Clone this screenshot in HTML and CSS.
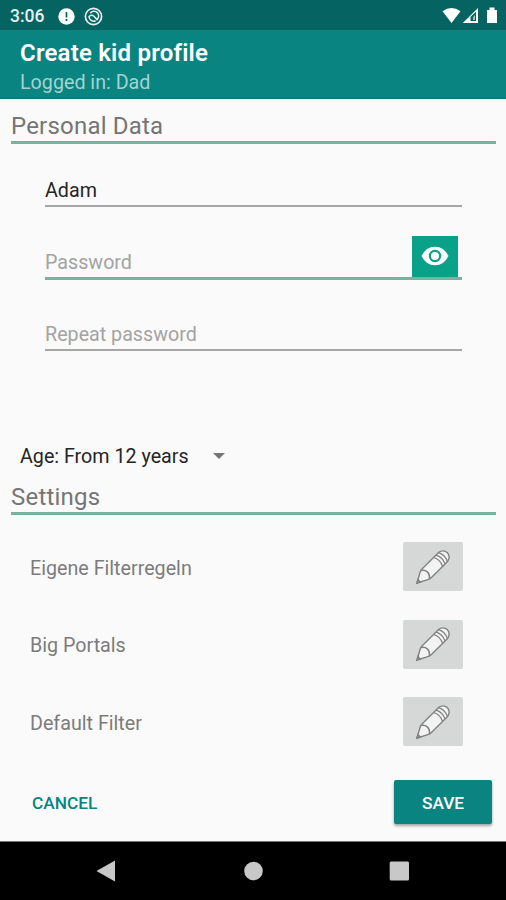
FILE: index.html
```html
<!DOCTYPE html>
<html lang="en">
<head>
<meta charset="utf-8">
<title>Create kid profile</title>
<link rel="stylesheet" href="styles.css">
</head>
<body>
<svg class="defs" width="0" height="0" aria-hidden="true">
  <symbol id="pencil" viewBox="0 0 36 36">
    <path d="M2 34 L5.2 23 Q5.7 21.2 7 19.9 L23.6 3.4 Q28.4 .2 32.2 3.6 Q35.8 7.4 32.8 12.2 L16.2 28.7 Q14.8 30.1 12.9 30.7 Z" fill="#f3f3f3" stroke="#828282" stroke-width="1.4" stroke-linejoin="round"/>
    <path d="M6.2 21.4 Q10.4 20.8 12 22.7 Q15 25 14.4 29.9 M2 34 L5.2 33 L3 30.8Z" fill="none" stroke="#828282" stroke-width="1.6"/>
    <path d="M18.6 8.5Q25.2 10.5 27.6 17.3M21 6.1Q27.6 8.1 30 14.9M23.4 3.7Q30 5.7 32.4 12.5" fill="none" stroke="#828282" stroke-width="1.3"/>
  </symbol>
</svg>
<div class="statusbar">
  <span class="clock">3:06</span>
  <svg class="alert" width="17" height="17" viewBox="0 0 17 17"><circle cx="8.5" cy="8.5" r="8.2" fill="#fff"/><path d="M8.5 4v5.6M8.5 11v2" stroke="#056462" stroke-width="1.7"/></svg>
  <svg class="swirl" width="19" height="19" viewBox="0 0 19 19" fill="none" stroke="#e6f0ef"><circle cx="9.5" cy="9.5" r="8.1" stroke-width="1.7"/><path d="M6.2 6.2A4.7 4.7 0 1 1 13 12.6L10 9.2Q7.4 7 5 9.5A4.7 4.7 0 0 0 11.6 13.7" stroke-width="1.5"/></svg>
  <svg class="signals" width="56" height="18" viewBox="0 0 56 18"><path d="M.5 4.3Q9.5-2.4 18.5 4.3L9.5 16Z" fill="#fff"/><path d="M20.8 16 36 1V16Z" fill="#fff"/><path d="M28.5 14V9.8L34 4.8V14Z" fill="#056462"/><path d="M31 13V10L33 8V13Z" fill="#9bc2bf"/><path d="M45 3h2.5V.5h5V3H55v13H45Z" fill="#fff"/></svg>
</div>
<header class="appbar">
  <h1><span>Create kid profile</span></h1>
  <p><span>Logged in: Dad</span></p>
</header>
<main>
  <h2 class="section personal"><span>Personal Data</span></h2>
  <form class="fields">
    <div class="field name"><span>Adam</span></div>
    <div class="field password"><span>Password</span>
      <div class="eye"><svg width="28" height="20" viewBox="0 0 28 20"><path d="M.5 10Q5 .7 14 .7T27.5 10Q23 19.3 14 19.3T.5 10Z" fill="#fff"/><circle cx="14" cy="10" r="5.1" fill="#fff" stroke="#09a188" stroke-width="2.2"/></svg></div>
    </div>
    <div class="field repeat"><span>Repeat password</span></div>
  </form>
  <div class="age"><span>Age: From 12 years</span><i class="caret"></i></div>
  <h2 class="section settings"><span>Settings</span></h2>
  <div class="options">
    <div class="option"><span>Eigene Filterregeln</span><div class="edit"><svg width="36" height="36"><use href="#pencil"/></svg></div></div>
    <div class="option"><span>Big Portals</span><div class="edit"><svg width="36" height="36"><use href="#pencil"/></svg></div></div>
    <div class="option"><span>Default Filter</span><div class="edit"><svg width="36" height="36"><use href="#pencil"/></svg></div></div>
  </div>
  <div class="actions"><span class="cancel">CANCEL</span><div class="save"><span>SAVE</span></div></div>
</main>
<nav class="navbar">
  <svg width="506" height="58" viewBox="0 0 506 58" fill="#c8c8c8"><path d="M96.5 29 115 18.5V39.5Z"/><circle cx="253.5" cy="29" r="9.3"/><rect x="389.7" y="19.5" width="19.3" height="19" rx="1.5"/></svg>
</nav>
</body>
</html>
```
FILE: styles.css
```css
* { box-sizing: border-box; }
body {
  margin: 0;
  width: 506px;
  height: 900px;
  overflow: hidden;
  display: flex;
  flex-direction: column;
  background: #fafafa;
  font-family: Roboto, sans-serif;
  white-space: nowrap;
}
h1, h2, p { margin: 0; }
svg { display: block; flex: none; }
.defs { position: absolute; }
.statusbar {
  height: 30px;
  flex: none;
  display: flex;
  align-items: center;
  padding: 2px 8px 0 10px;
  background: #056462;
  color: #e6f0ef;
}
.clock { width: 48px; font-size: 17.5px; font-weight: 500; }
.swirl { margin-left: 9px; }
.signals { margin-left: auto; }
.appbar {
  height: 69px;
  flex: none;
  padding: 9px 20px 0;
  background: #098481;
  border-bottom: 1px solid #077673;
}
.appbar h1 { font-size: 24px; line-height: 28px; font-weight: 600; letter-spacing: .2px; color: #fff; }
.appbar p { font-size: 19.7px; line-height: 32px; color: #a5d2d0; }
main { height: 742px; flex: none; }
.section {
  margin: 0 10px 0 11px;
  border-bottom: 3px solid #75b5a0;
  color: #757575;
  font-size: 24px;
  font-weight: 400;
  letter-spacing: .2px;
}
.personal { height: 45px; line-height: 54px; }
.fields { margin: 0 44px 0 45px; }
.field {
  display: flex;
  align-items: flex-end;
  font-size: 19.7px;
  line-height: 28px;
  color: #a3a3a3;
  border-bottom: 2px solid #a6a6a6;
}
.name { height: 63px; color: #252525; }
.password { height: 73px; border-bottom: 3px solid #75b5a0; }
.repeat { height: 71px; }
.eye {
  width: 46px;
  height: 41px;
  margin: 0 4px 0 auto;
  padding-bottom: 1px;
  display: flex;
  align-items: center;
  justify-content: center;
  background: #09a188;
}
.age {
  height: 40px;
  margin-top: 85px;
  padding-left: 20px;
  display: flex;
  align-items: center;
  font-size: 19.7px;
  color: #252525;
}
.caret {
  margin-left: 24px;
  border: 6px solid transparent;
  border-top-color: #757575;
  border-bottom: 0;
}
.settings { height: 39px; line-height: 42px; }
.options { padding: 27px 43px 0 30px; }
.option {
  height: 49px;
  margin-bottom: 28.7px;
  display: flex;
  align-items: center;
  justify-content: space-between;
  font-size: 19.7px;
  color: #7c7c7c;
}
.option:last-child { margin-bottom: 0; }
.option span { padding-top: 3px; }
.edit {
  width: 60px;
  height: 49px;
  display: flex;
  align-items: center;
  justify-content: center;
  background: #d6d7d7;
  border-radius: 2px;
}
.actions {
  height: 44px;
  margin-top: 33.9px;
  padding: 0 14px 0 32px;
  display: flex;
  align-items: center;
  justify-content: space-between;
  font-size: 17.3px;
  font-weight: 500;
}
.actions span { padding-top: 1px; }
.cancel { color: #098481; }
.save {
  width: 98px;
  height: 44px;
  display: flex;
  align-items: center;
  justify-content: center;
  background: #098481;
  border-radius: 2px;
  color: #fff;
  box-shadow: 0 2px 3px rgba(0, 0, 0, .35);
}
.navbar { height: 59px; flex: none; background: #000; border-top: 1px solid #777; }
```
